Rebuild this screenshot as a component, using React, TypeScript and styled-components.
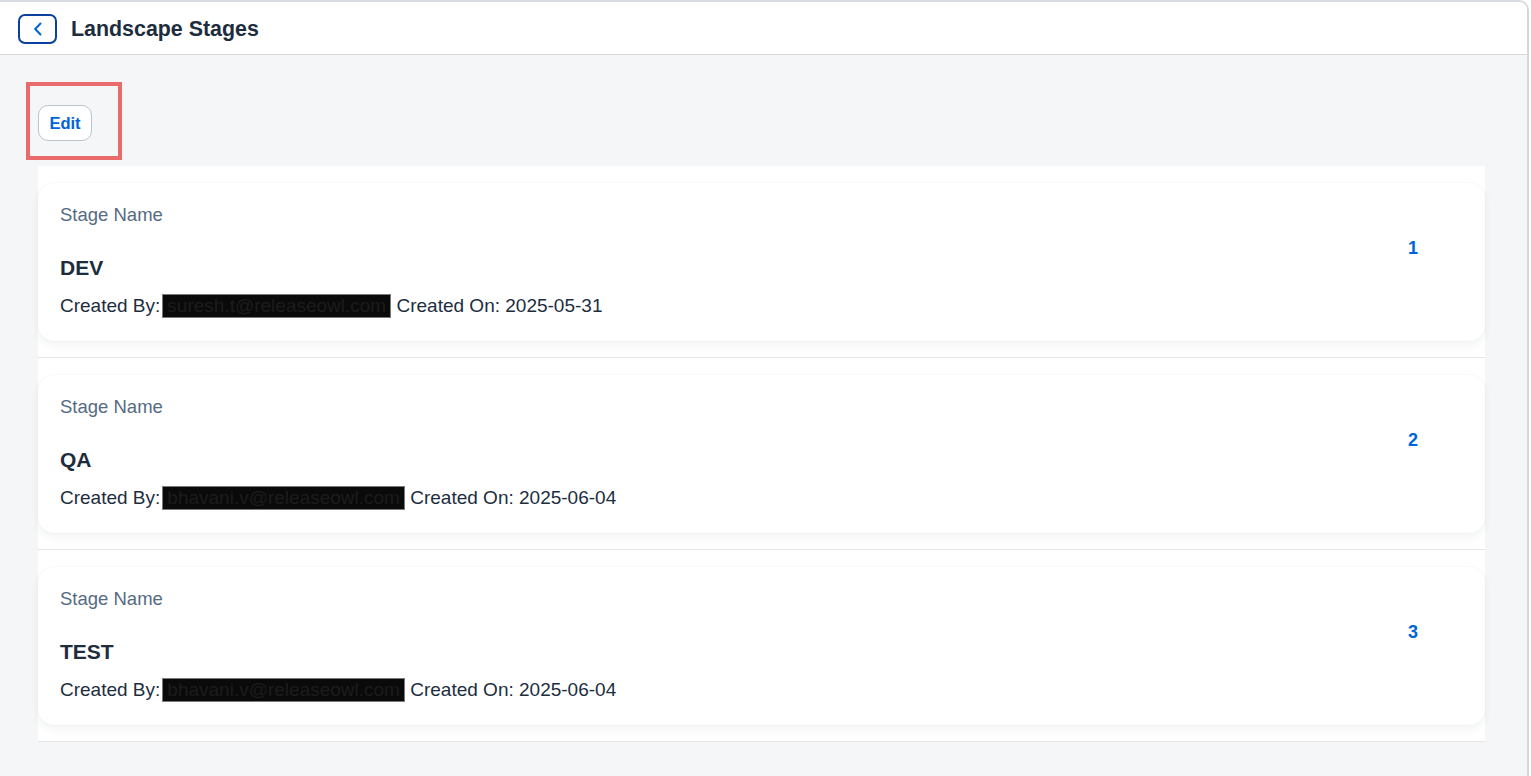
import React from "react";
import styled, { createGlobalStyle } from "styled-components";

const GlobalStyle = createGlobalStyle`
  html, body { margin: 0; padding: 0; background: #ffffff; }
  body { font-family: "Liberation Sans", Arial, sans-serif; color: #1d2d3e; }
  * { box-sizing: border-box; }
`;

const Frame = styled.div`
  width: 1529px;
  height: 776px;
  background: #f5f6f7;
  border-top: 2px solid #d9dde1;
  border-right: 2px solid #d3d8dd;
  border-top-right-radius: 10px;
  overflow: hidden;
  display: flex;
  flex-direction: column;
`;

const Header = styled.header`
  height: 53px;
  flex: none;
  background: #ffffff;
  border-bottom: 1px solid #d9d9d9;
  display: flex;
  align-items: center;
  gap: 14px;
  padding-left: 18px;
`;

const BackButton = styled.button`
  width: 39px;
  height: 30px;
  border: 2px solid #0b3fa0;
  border-radius: 7px;
  background: #ffffff;
  display: flex;
  align-items: center;
  justify-content: center;
  padding: 0;
  margin-top: 2px;
`;

const Title = styled.h1`
  margin: 0;
  font-size: 21.4px;
  font-weight: 700;
  color: #1d2d3e;
  margin-top: 2px;
`;

const Content = styled.main`
  flex: 1;
  padding: 50px 42px 0 38px;
  display: flex;
  flex-direction: column;
`;

const Toolbar = styled.div`
  display: flex;
  align-items: center;
  height: 36px;
  margin-bottom: 25px;
`;

const Highlight = styled.div`
  position: relative;
`;

const HighlightFrame = styled.span`
  position: absolute;
  left: -12px;
  top: -23px;
  width: 96px;
  height: 78px;
  border: 4px solid #e86c6c;
  pointer-events: none;
`;

const EditButton = styled.button`
  height: 36px;
  width: 54px;
  border: 1px solid #bcc3ca;
  border-radius: 10px;
  background: #ffffff;
  color: #0064d9;
  font-family: "Liberation Sans", Arial, sans-serif;
  font-size: 16.5px;
  font-weight: 700;
  padding: 0;
`;

const List = styled.ul`
  list-style: none;
  margin: 0;
  padding: 0;
  background: #ffffff;
`;

const Item = styled.li`
  padding: 17px 0 16px;
  border-bottom: 1px solid #e5e5e5;
  background: #ffffff;
`;

const Card = styled.div`
  display: flex;
  justify-content: space-between;
  align-items: flex-start;
  height: 158px;
  padding: 20px 67px 0 22px;
  background: #ffffff;
  border-radius: 16px;
  box-shadow: 0 0 2px rgba(34, 53, 72, 0.06), 0 4px 10px rgba(34, 53, 72, 0.06);
`;

const Info = styled.div`
  display: flex;
  flex-direction: column;
`;

const Label = styled.div`
  font-size: 18.5px;
  line-height: 24px;
  color: #556b82;
`;

const StageName = styled.div`
  margin-top: 28px;
  font-size: 21px;
  line-height: 26px;
  font-weight: 700;
  color: #1d2d3e;
`;

const Meta = styled.div`
  margin-top: 13px;
  font-size: 19px;
  line-height: 24px;
  color: #1d2d3e;
  display: flex;
  align-items: center;
  white-space: pre;
`;

const Redacted = styled.span`
  display: inline-block;
  height: 24px;
  line-height: 22px;
  margin-left: 2px;
  padding: 0 4px 0 4px;
  background: #0a0a0a;
  color: #1c1c1c;
  border: 1px solid #7a7a7a;
`;

const Order = styled.div`
  margin-top: 33px;
  font-size: 18px;
  line-height: 24px;
  font-weight: 700;
  color: #0064d9;
`;

const stages = [
  { name: "DEV", by: "suresh.t@releaseowl.com", on: "2025-05-31", order: 1 },
  { name: "QA", by: "bhavani.v@releaseowl.com", on: "2025-06-04", order: 2 },
  { name: "TEST", by: "bhavani.v@releaseowl.com", on: "2025-06-04", order: 3 },
];

export default function App() {
  return (
    <>
      <GlobalStyle />
      <Frame>
        <Header>
          <BackButton aria-label="Back">
            <svg width="12" height="16" viewBox="0 0 12 16" fill="none">
              <path d="M8.5 2.5 L3.2 8 L8.5 13.5" stroke="#0064d9" strokeWidth="2" strokeLinecap="round" strokeLinejoin="round" />
            </svg>
          </BackButton>
          <Title>Landscape Stages</Title>
        </Header>
        <Content>
          <Toolbar>
            <Highlight>
              <EditButton>Edit</EditButton>
              <HighlightFrame />
            </Highlight>
          </Toolbar>
          <List>
            {stages.map((s) => (
              <Item key={s.order}>
                <Card>
                  <Info>
                    <Label>Stage Name</Label>
                    <StageName>{s.name}</StageName>
                    <Meta>
                      Created By:<Redacted>{s.by}</Redacted> Created On: {s.on}
                    </Meta>
                  </Info>
                  <Order>{s.order}</Order>
                </Card>
              </Item>
            ))}
          </List>
        </Content>
      </Frame>
    </>
  );
}
